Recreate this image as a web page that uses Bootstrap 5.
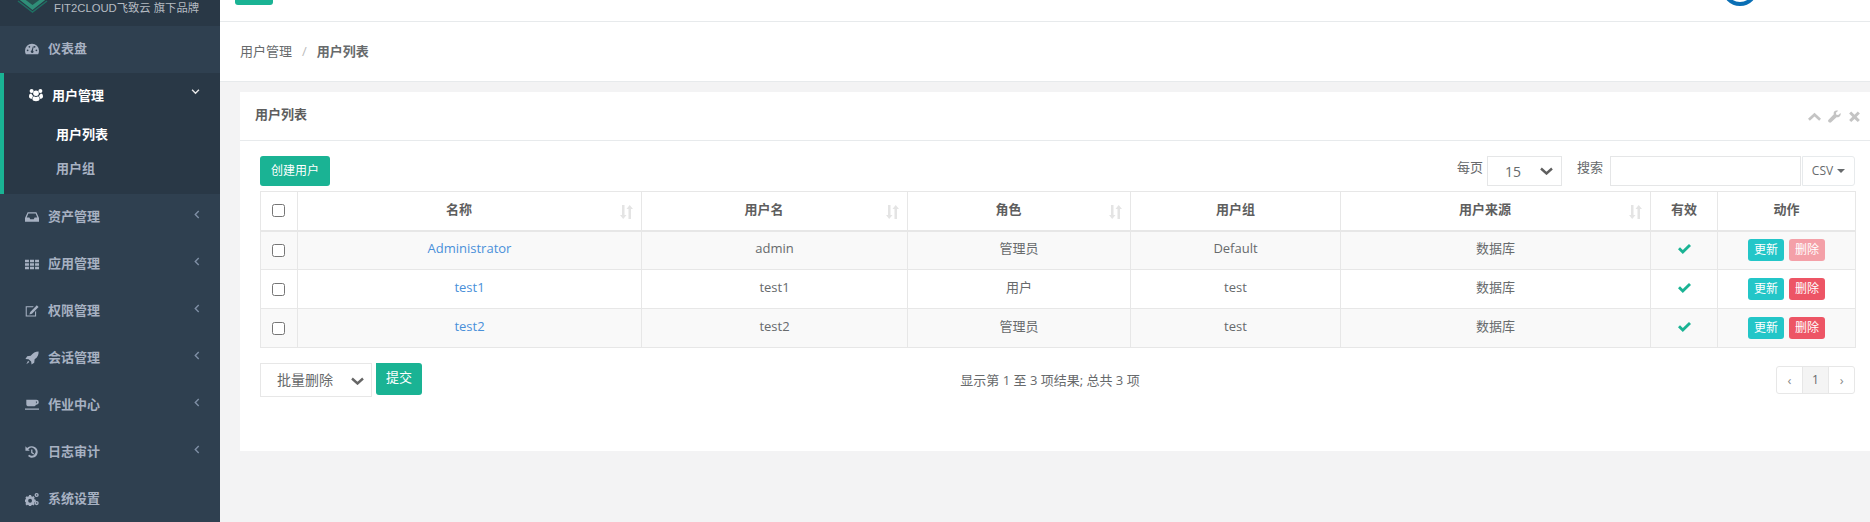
<!DOCTYPE html>
<html lang="zh">
<head>
<meta charset="utf-8">
<title>用户列表</title>
<link href="https://cdn.jsdelivr.net/npm/bootstrap@5.3.0/dist/css/bootstrap.min.css" rel="stylesheet">
<style>
html,body{height:522px;overflow:hidden}
body{background:#f3f3f4;color:#676a6c;font:13px/18.57px "Open Sans","Noto Sans CJK SC",sans-serif}
.app-shell{height:522px}
.side{width:220px;background:#2f4050;color:#a7b1c2;font-weight:600}
.brand{height:26px;overflow:hidden;background:#293846}
.brand-inner{margin-top:-10px;padding-left:15px;gap:4px;height:34px;color:#b5bbc2;font:11.3px "Liberation Sans","Noto Sans CJK SC",sans-serif;white-space:nowrap}
.brand-inner svg{flex:none}
.mi{height:47px;padding:0 0 2px 25px;gap:9px}
.mi svg.ic{width:14px;height:14px;flex:none;fill:#a7b1c2}
.mi .lab{flex:1}
.mi .chev{width:6px;height:9px;margin:-5px 20px 0 0;fill:none;stroke:#7f8fa6;stroke-width:1.6}
.act{background:#293846;border-left:4px solid #1ab394;height:121px;color:#fff}
.act .mi{height:46px;padding-left:25px}
.act .mi svg.ic{fill:#fff}
.act .mi .chev{width:9px;height:6px;margin:-7px 20px 0 0;stroke:#e8e8e8}
.sub{padding:0 0 2px 52px;height:33.5px;color:#a7b1c2}
.sub.cur{color:#fff;font-weight:700}
.topstrip{height:22px;background:#fff;border-bottom:1.5px solid #e7eaec;overflow:hidden;flex:none}
.clip-btn{width:38px;height:5px;background:#1ab394;border-radius:0 0 3px 3px;margin-left:15px}
.ring{width:36px;height:36px;border:4px solid #0a6fb5;border-radius:50%;margin:-30px 112px 0 0;flex:none}
.crumbs{height:60px;background:#fff;border-bottom:1.5px solid #e7eaec;padding-left:20px;flex:none}
.crumbs .sep{color:#bbb;margin:0 10px}
.panel-box{margin:10px 0 0 20px;background:#fff;height:359px;flex:none}
.panel-head{height:49px;border-bottom:1.5px solid #e7eaec;padding:0 9px 3px 15px;font-weight:600;color:#5e5e5e}
.tools{gap:7px;margin-top:3px}
.tools svg{width:13px;height:13px;fill:#c4c4c4}
.panel-body{padding:15px 15px 0 20px}
.tb1{height:35px}
.btn-g{background:#1ab394;color:#fff;border:0;border-radius:3px;font-size:12px;padding:0;height:30px;width:70px}
.tb-right{height:30px}
.lbl{margin:-8px 4px 0 0;font-size:13px;color:#676a6c;line-height:20px}
.sel-pg{width:75px;height:30px;border:1px solid #e5e6e7;padding:5px 0 0 17px;position:relative;font-size:14px;line-height:20px;margin-right:15px;color:#676a6c}
.sel-arrow{position:absolute;width:13px;height:8px;fill:none;stroke:#5f5f5f;stroke-width:2.4}
.sel-pg .sel-arrow{right:8px;top:10px}
.search-f{width:191px;height:30px;border:1px solid #e5e6e7;background:#fff}
.csv{width:53px;height:30px;border:1px solid #e7eaec;border-radius:0 3px 3px 0;margin-left:1px;font-size:12px;color:#676a6c;gap:4px}
.csv i{display:block;border:4px solid transparent;border-top:4px solid #676a6c;border-bottom:0}
.grid-t{width:1595px;table-layout:fixed;border-collapse:collapse;margin:0;font-size:13px;color:#676a6c}
.grid-t th,.grid-t td{border:1px solid #e7e7e7;text-align:center;vertical-align:middle;padding:0;position:relative}
.grid-t thead tr{height:39px}
.grid-t thead th{border-bottom:2px solid #e7e7e7;font-weight:700;color:#5e5e5e;padding-bottom:3px}
.grid-t thead th.srt{padding-right:21px}
.grid-t tbody tr{height:39px}
.grid-t tbody td{padding-bottom:4px}
.grid-t tbody tr:nth-child(odd) td{background:#f9f9f9}
.grid-t a{color:#4a90d9;text-decoration:none}
.grid-t th.chk,.grid-t td.chk{padding:0 2px 2px 0}
.grid-t .cbx{width:13px;height:13px;border:1px solid #767676;border-radius:2.5px;display:inline-block;background:#fff;vertical-align:middle}
.sort-ic{position:absolute;right:8px;top:13px;width:13px;height:14px;fill:#e4e4e4}
.ok{width:13px;height:10px;fill:#1ab394}
.mini{display:inline-block;width:36px;height:22px;line-height:22px;border-radius:3px;color:#fff;font-size:12px;vertical-align:middle}
.mini-up{background:#23c6c8;margin-right:5px}
.mini-del{background:#ed5565}
.mini-off{background:#f4a0a8}
.grid-t td.act-cell{padding:0}
.foot-row{margin-top:15px;height:36px;position:relative}
.sel-bulk{width:112px;height:34px;border:1px solid #e7e7e7;padding:6px 0 0 16px;line-height:20px;font-size:14px;position:relative;margin-right:4px;color:#676a6c}
.sel-bulk .sel-arrow{right:7px;top:13px;stroke:#666}
.foot-sub{width:46px;height:32px;font-size:13px;border-radius:0 3px 3px 3px;padding-bottom:3px}
.foot-info{flex:1;text-align:center;padding-right:98px;font-size:13px;margin-top:-2px}
.pager{width:79px;height:28px;border:1px solid #e7e7e7;border-radius:3px;margin-top:3px;font-size:12px;color:#8a8a8a}
.pager span{height:100%}
.pager .pc{width:25px;font-size:13px}
.pager .pm{width:28px;border-left:1px solid #e7e7e7;border-right:1px solid #e7e7e7;background:#f4f4f4;color:#676a6c}
</style>
</head>
<body>
<svg width="0" height="0" class="d-none"><symbol id="sorti" viewBox="0 0 13 14"><path d="M2 0h2.500v10H6.500L3.200 14 0 10h2ZM8.500 14H11V4h2L9.700 0 6.500 4h2Z"/></symbol><symbol id="lt" viewBox="0 0 7 10"><path d="M5.500 1 1.500 5l4 4"/></symbol><symbol id="tick" viewBox="0 0 13 10"><path d="M4.800 10 0 5.200 2 3.200 4.800 6 11 0l2 2Z"/></symbol></svg>
<div class="app-shell d-flex">
<aside class="side flex-shrink-0">
  <div class="brand">
    <div class="brand-inner d-flex align-items-center">
      <svg width="35" height="34" viewBox="0 0 35 34"><path d="M17.500 -6 34 7 17.500 20 1 7Z" fill="#2f8f78"/><path d="M17.500 1 27 8 17.500 15 8 8Z" fill="#27504f"/><path d="M3 11 17.500 22 32 11" fill="none" stroke="#1f6f62" stroke-width="1.500"/></svg>
      <span>FIT2CLOUD飞致云 旗下品牌</span>
    </div>
  </div>
  <div class="mi d-flex align-items-center"><svg class="ic" viewBox="0 0 16 16"><path d="M8 2a8 8 0 0 0-8 8c0 1.500.4 2.900 1 4h14c.6-1.100 1-2.500 1-4a8 8 0 0 0-8-8ZM3 10.500a1 1 0 1 1 0-2 1 1 0 0 1 0 2Zm2-4a1 1 0 1 1 0-2 1 1 0 0 1 0 2Zm3 6a1.500 1.500 0 0 1-.5-2.900L9 5h1L9 9.700A1.500 1.500 0 0 1 8 12.500Zm3-6a1 1 0 1 1 0-2 1 1 0 0 1 0 2Zm2 4a1 1 0 1 1 0-2 1 1 0 0 1 0 2Z"/></svg><span class="lab">仪表盘</span></div>
  <div class="act">
    <div class="mi d-flex align-items-center"><svg class="ic" viewBox="0 0 16 16"><circle cx="8" cy="6" r="3.200"/><circle cx="3" cy="3.500" r="2.300"/><circle cx="13" cy="3.500" r="2.300"/><path d="M0 10c0-2.500.7-3.800 2.600-3.800.5.900 1.200 2 2.100 2.800C4 10 3.600 11 3.600 12.300 1.500 12.300 0 11.500 0 10Zm16 0c0-2.500-.7-3.800-2.600-3.800-.5.900-1.200 2-2.100 2.800.7 1 1.100 2 1.100 3.300 2.100 0 3.600-.8 3.600-2.300ZM5.600 9.500c1.400 1 3.400 1 4.800 0 1.100.4 1.600 2 1.600 3.700 0 2.400-8 2.400-8 0 0-1.700.5-3.300 1.600-3.700Z"/></svg><span class="lab">用户管理</span><svg class="chev" viewBox="0 0 10 7"><path d="M1 1 5 5 9 1"/></svg></div>
    <div class="sub cur d-flex align-items-center">用户列表</div>
    <div class="sub d-flex align-items-center">用户组</div>
  </div>
  <div class="mi d-flex align-items-center"><svg class="ic" viewBox="0 0 16 16"><path d="M3 2.500h10L16 9v4.500H0V9Zm.8 1.500L2 8.500h3l1 2h4l1-2h3L12.200 4Z"/></svg><span class="lab">资产管理</span><svg class="chev"><use href="#lt"/></svg></div>
  <div class="mi d-flex align-items-center"><svg class="ic" viewBox="0 0 16 16"><path d="M0 3h4.500v3H0Zm5.700 0h4.600v3H5.700Zm5.800 0H16v3h-4.500ZM0 7h4.500v3H0Zm5.700 0h4.600v3H5.700Zm5.800 0H16v3h-4.500ZM0 11h4.500v3H0Zm5.700 0h4.600v3H5.700Zm5.800 0H16v3h-4.500Z"/></svg><span class="lab">应用管理</span><svg class="chev"><use href="#lt"/></svg></div>
  <div class="mi d-flex align-items-center"><svg class="ic" viewBox="0 0 16 16"><path d="M1.500 2.500H10l-1 1.200H2v9.500h9.500V9l1.200-1.200v6.600H.8V2.500Z"/><path d="M13.500 1.500 15.500 3.500 8 11l-3 1 1-3Z"/></svg><span class="lab">权限管理</span><svg class="chev"><use href="#lt"/></svg></div>
  <div class="mi d-flex align-items-center"><svg class="ic" viewBox="0 0 16 16"><path d="M15.500.5c.3 3.500-1 6.500-4.500 9l-.5 4-3 2-.5-3.500L4 9.500.5 9l2-3 4-.5C9 2 12 .5 15.500.5ZM3.500 11 5 12.500 1.500 15Z"/></svg><span class="lab">会话管理</span><svg class="chev"><use href="#lt"/></svg></div>
  <div class="mi d-flex align-items-center"><svg class="ic" viewBox="0 0 16 16"><path d="M1.500 2H13a2.800 2.800 0 0 1 0 5.600h-.5c-.5 1.200-1.500 1.900-2.500 1.900H4C2.700 9.500 1.500 8.500 1.500 7ZM12.500 3.500v2.700a1.400 1.400 0 0 0 0-2.700ZM0 12h16v1.500H0Z"/></svg><span class="lab">作业中心</span><svg class="chev"><use href="#lt"/></svg></div>
  <div class="mi d-flex align-items-center"><svg class="ic" viewBox="0 0 16 16"><path d="M8 1.500a6.500 6.500 0 1 1-4.600 11.100l1.400-1.400A4.500 4.500 0 1 0 3.800 5L5.500 6.500H0.500V1.500L2.400 3.300A6.500 6.500 0 0 1 8 1.500Zm-1 3.500h1.500v3.300l2 1.500-.8 1.100L7 9Z"/></svg><span class="lab">日志审计</span><svg class="chev"><use href="#lt"/></svg></div>
  <div class="mi d-flex align-items-center"><svg class="ic" viewBox="0 0 16 16"><path fill-rule="evenodd" d="M4.700 3.500h2.200l.4 1.300 1.100.5 1.200-.6 1.500 1.500-.6 1.200.5 1.100 1.300.4v2.200l-1.300.4-.5 1.100.6 1.200-1.500 1.500-1.200-.6-1.100.5-.4 1.300H4.700l-.4-1.300-1.100-.5-1.200.6L.5 13.800l.6-1.200-.5-1.100-.6-.3V8.800l.6-.2.5-1.100-.6-1.200L2 4.800l1.200.6 1.100-.5ZM5.800 7.800a2.200 2.200 0 1 0 0 4.400 2.200 2.200 0 0 0 0-4.400Z"/><path fill-rule="evenodd" d="M13.300 1a2.400 2.400 0 1 1 0 4.800 2.400 2.400 0 0 1 0-4.800Zm0 1.500a.9.9 0 1 0 0 1.800.9.9 0 0 0 0-1.800ZM13.300 10.200a2.400 2.400 0 1 1 0 4.800 2.400 2.400 0 0 1 0-4.800Zm0 1.500a.9.9 0 1 0 0 1.800.9.9 0 0 0 0-1.800Z"/></svg><span class="lab">系统设置</span></div>
</aside>

<main class="flex-grow-1 d-flex flex-column overflow-hidden">
  <div class="topstrip d-flex justify-content-between align-items-start">
    <div class="clip-btn"></div>
    <div class="ring"></div>
  </div>
  <nav class="crumbs d-flex align-items-center"><span>用户管理</span><span class="sep">/</span><strong class="fw-bold">用户列表</strong></nav>
  <section class="panel-box">
    <div class="panel-head d-flex align-items-center justify-content-between">
      <span>用户列表</span>
      <span class="tools d-flex align-items-center">
        <svg viewBox="0 0 14 14"><path d="M7 3 14 9.500 12 11.500 7 7 2 11.500 0 9.500Z"/></svg>
        <svg viewBox="0 0 14 14"><path d="M13.500 3.200 11 5.500 9 5 8.500 3 11 .7C9 0 7.300.6 6.500 2c-.5 1-.5 1.800-.2 2.700L.6 10.500a1.700 1.700 0 0 0 0 2.300l.5.500c.6.600 1.700.6 2.300 0L9.200 7.700c1 .3 2 .2 2.900-.5 1.300-1 1.900-2.500 1.400-4Z"/></svg>
        <svg viewBox="0 0 14 14"><path d="M3.500 1.500 7 5 10.500 1.500 12.800 3.800 9.300 7.300 12.800 10.800 10.500 13 7 9.600 3.500 13 1.200 10.800 4.700 7.300 1.200 3.800Z"/></svg>
      </span>
    </div>
    <div class="panel-body">
      <div class="tb1 d-flex justify-content-between align-items-start">
        <button type="button" class="btn-g">创建用户</button>
        <div class="tb-right d-flex align-items-center">
          <span class="lbl">每页</span>
          <div class="sel-pg">15<svg class="sel-arrow" viewBox="0 0 13 8"><path d="M1 1.500 6.500 6.500 12 1.500"/></svg></div>
          <span class="lbl" style="margin-right:7px">搜索</span>
          <div class="search-f"></div>
          <div class="csv d-flex align-items-center justify-content-center">CSV<i></i></div>
        </div>
      </div>
      <table class="grid-t">
        <colgroup><col style="width:37px"><col style="width:344px"><col style="width:266px"><col style="width:223px"><col style="width:210px"><col style="width:310px"><col style="width:67px"><col style="width:138px"></colgroup>
        <thead><tr>
          <th class="chk"><span class="cbx"></span></th>
          <th class="srt">名称<svg class="sort-ic"><use href="#sorti"/></svg></th>
          <th class="srt">用户名<svg class="sort-ic"><use href="#sorti"/></svg></th>
          <th class="srt">角色<svg class="sort-ic"><use href="#sorti"/></svg></th>
          <th>用户组</th>
          <th class="srt">用户来源<svg class="sort-ic"><use href="#sorti"/></svg></th>
          <th>有效</th>
          <th>动作</th>
        </tr></thead>
        <tbody>
          <tr><td class="chk"><span class="cbx"></span></td><td><a href="#">Administrator</a></td><td>admin</td><td>管理员</td><td>Default</td><td>数据库</td><td><svg class="ok"><use href="#tick"/></svg></td><td class="act-cell"><span class="mini mini-up">更新</span><span class="mini mini-off">删除</span></td></tr>
          <tr><td class="chk"><span class="cbx"></span></td><td><a href="#">test1</a></td><td>test1</td><td>用户</td><td>test</td><td>数据库</td><td><svg class="ok"><use href="#tick"/></svg></td><td class="act-cell"><span class="mini mini-up">更新</span><span class="mini mini-del">删除</span></td></tr>
          <tr><td class="chk"><span class="cbx"></span></td><td><a href="#">test2</a></td><td>test2</td><td>管理员</td><td>test</td><td>数据库</td><td><svg class="ok"><use href="#tick"/></svg></td><td class="act-cell"><span class="mini mini-up">更新</span><span class="mini mini-del">删除</span></td></tr>
        </tbody>
      </table>
      <div class="foot-row d-flex align-items-start">
        <div class="sel-bulk">批量删除<svg class="sel-arrow" viewBox="0 0 13 8"><path d="M1 1.500 6.500 6.500 12 1.500"/></svg></div>
        <button type="button" class="btn-g foot-sub">提交</button>
        <div class="foot-info align-self-center">显示第 1 至 3 项结果; 总共 3 项</div>
        <div class="pager d-flex"><span class="pc d-flex align-items-center justify-content-center">‹</span><span class="pm d-flex align-items-center justify-content-center">1</span><span class="pc d-flex align-items-center justify-content-center">›</span></div>
      </div>
    </div>
  </section>
</main>
</div>
<script src="https://cdn.jsdelivr.net/npm/bootstrap@5.3.0/dist/js/bootstrap.bundle.min.js"></script>
</body>
</html>
